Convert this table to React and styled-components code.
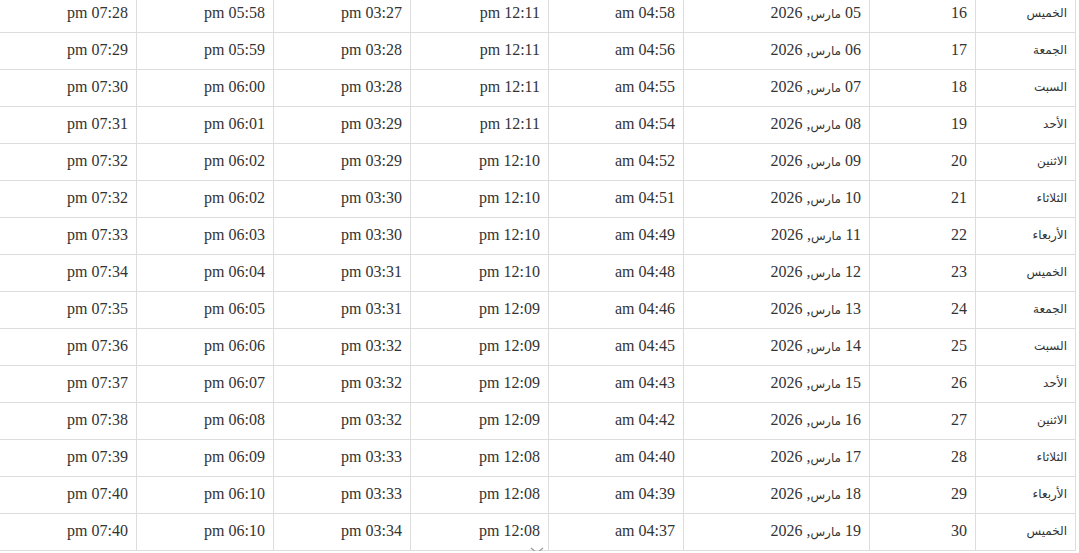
import React from 'react';
import styled, { createGlobalStyle } from 'styled-components';

const GlobalStyle = createGlobalStyle`
  html, body {
    margin: 0;
    padding: 0;
    background: #fff;
    overflow: hidden;
  }
`;

const days = ['الخميس', 'الجمعة', 'السبت', 'الأحد', 'الاثنين', 'الثلاثاء', 'الأربعاء'];

const fajr = ['04:58', '04:56', '04:55', '04:54', '04:52', '04:51', '04:49', '04:48', '04:46', '04:45', '04:43', '04:42', '04:40', '04:39', '04:37'];
const dhuhr = ['12:11', '12:11', '12:11', '12:11', '12:10', '12:10', '12:10', '12:10', '12:09', '12:09', '12:09', '12:09', '12:08', '12:08', '12:08'];
const asr = ['03:27', '03:28', '03:28', '03:29', '03:29', '03:30', '03:30', '03:31', '03:31', '03:32', '03:32', '03:32', '03:33', '03:33', '03:34'];
const maghrib = ['05:58', '05:59', '06:00', '06:01', '06:02', '06:02', '06:03', '06:04', '06:05', '06:06', '06:07', '06:08', '06:09', '06:10', '06:10'];
const isha = ['07:28', '07:29', '07:30', '07:31', '07:32', '07:32', '07:33', '07:34', '07:35', '07:36', '07:37', '07:38', '07:39', '07:40', '07:40'];

const rows = fajr.map((f, i) => ({
  day: days[i % 7],
  num: 16 + i,
  dd: String(5 + i).padStart(2, '0'),
  times: [`${f} am`, `${dhuhr[i]} pm`, `${asr[i]} pm`, `${maghrib[i]} pm`, `${isha[i]} pm`],
}));

const colWidths = [100, 106, 186, 135, 138, 137, 137, 137];

const Page = () => (
  <Wrapper>
    <Table>
      <colgroup>
        {colWidths.map((w, i) => <col key={i} style={{ width: w }} />)}
      </colgroup>
      <tbody>
        {rows.map((r) => (
          <tr key={r.num}>
            <Cell $kind="day">{r.day}</Cell>
            <Cell>{r.num}</Cell>
            <Cell>
              {r.dd} <Month>مارس</Month>, 2026
            </Cell>
            {r.times.map((t, j) => <Cell key={j}>{t}</Cell>)}
          </tr>
        ))}
      </tbody>
    </Table>
    <Chevron viewBox="0 0 14 7" width="14" height="7">
      <path d="M1 1 L7 6 L13 1" fill="none" stroke="#999" strokeWidth="1.2" />
    </Chevron>
  </Wrapper>
);

const Wrapper = styled.div`
  position: relative;
  direction: rtl;
  width: 1076px;
  margin-top: -5px;
`;

const Table = styled.table`
  width: 1076px;
  table-layout: fixed;
  border-collapse: collapse;
  color: #333;
  font-family: "Liberation Serif", serif;
  font-size: 16px;

  td:last-child {
    border-left: 0;
  }
`;

const Cell = styled.td`
  height: 33px;
  padding: 0 8px 3px;
  border: 1px solid #ddd;
  text-align: right;
  vertical-align: middle;
  white-space: nowrap;
  font-family: ${(p) => (p.$kind === 'day' ? '"DejaVu Sans", sans-serif' : '"Liberation Serif", "DejaVu Sans", serif')};
  font-size: ${(p) => (p.$kind === 'day' ? '12px' : '16px')};
`;

const Month = styled.span`
  font-family: "DejaVu Sans", sans-serif;
  font-size: 12px;
`;

const Chevron = styled.svg`
  position: absolute;
  left: 530px;
  bottom: -3px;
`;

export default function App() {
  return (
    <>
      <GlobalStyle />
      <Page />
    </>
  );
}
